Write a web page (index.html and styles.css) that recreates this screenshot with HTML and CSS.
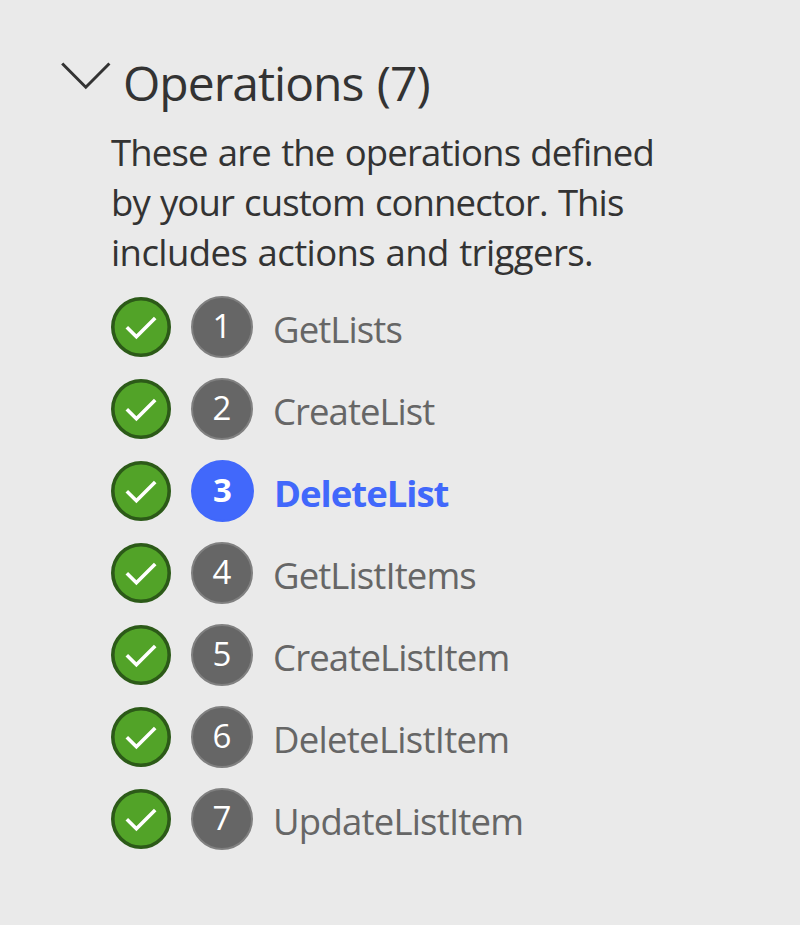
FILE: index.html
```
<!DOCTYPE html>
<html lang="en">
<head>
<meta charset="utf-8">
<title>Operations</title>
<link rel="stylesheet" href="styles.css">
</head>
<body>
<svg class="defs" width="0" height="0" aria-hidden="true">
  <symbol id="check" viewBox="0 0 60 60">
    <circle cx="30" cy="30" r="28.2" fill="#52a328" stroke="#2c5a18" stroke-width="3.6"/>
    <path d="M15.8 30.3 25.4 39.8 44.2 21" fill="none" stroke="#fff" stroke-width="3.6"/>
  </symbol>
</svg>
<section class="operations">
  <header class="heading">
    <svg class="chevron" viewBox="0 0 50 28"><path d="M1.2 1.5 24.8 25.2 48.4 1.5" fill="none" stroke="#333" stroke-width="3"/></svg>
    <h1 class="title">Operations (7)</h1>
  </header>
  <p class="description"><span class="line line-1">These are the operations defined</span><span class="line line-2">by your custom connector. This</span><span class="line line-3">includes actions and triggers.</span></p>
  <ol class="list">
    <li class="item"><svg class="status"><use href="#check"/></svg><span class="number">1</span><span class="label l1">GetLists</span></li>
    <li class="item"><svg class="status"><use href="#check"/></svg><span class="number">2</span><span class="label l2">CreateList</span></li>
    <li class="item selected"><svg class="status"><use href="#check"/></svg><span class="number">3</span><span class="label l3">DeleteList</span></li>
    <li class="item"><svg class="status"><use href="#check"/></svg><span class="number">4</span><span class="label l4">GetListItems</span></li>
    <li class="item"><svg class="status"><use href="#check"/></svg><span class="number">5</span><span class="label l5">CreateListItem</span></li>
    <li class="item"><svg class="status"><use href="#check"/></svg><span class="number">6</span><span class="label l6">DeleteListItem</span></li>
    <li class="item"><svg class="status"><use href="#check"/></svg><span class="number">7</span><span class="label l7">UpdateListItem</span></li>
  </ol>
</section>
</body>
</html>
```
FILE: styles.css
```
* { box-sizing: border-box; }
body {
  margin: 0;
  min-height: 925px;
  background: #eaeaea;
  color: #333;
  font-family: "Open Sans", "Noto Sans", sans-serif;
}
.defs { display: block; }
.operations { padding: 49px 61px 0; }
.heading { display: flex; height: 66px; }
.chevron { width: 50px; height: 28px; margin-top: 13px; flex: none; }
.title {
  margin: 0 0 0 12px;
  font-size: 48px;
  font-weight: 400;
  line-height: 68px;
  letter-spacing: -1px;
  word-spacing: 2px;
  white-space: nowrap;
}
.description { margin: 12px 0 0 50px; font-size: 36.5px; line-height: 50px; }
.line { display: block; white-space: nowrap; word-spacing: 1.5px; }
.line-1 { letter-spacing: -0.84px; }
.line-2 { letter-spacing: -0.88px; }
.line-3 { letter-spacing: -0.59px; }
.list {
  display: flex;
  flex-direction: column;
  gap: 20px;
  margin: 19px 0 0 50px;
  padding: 0;
  list-style: none;
}
.item { display: flex; align-items: center; height: 62px; }
.status { width: 60px; height: 60px; flex: none; }
.number {
  width: 62px;
  height: 62px;
  margin-left: 20px;
  border: 2px solid #808080;
  border-radius: 50%;
  background: #666;
  color: #fff;
  font-size: 33px;
  line-height: 56px;
  text-align: center;
}
.label {
  margin-left: 20px;
  padding-top: 4px;
  color: #666;
  font-size: 36.5px;
  line-height: 50px;
}
.l1 { letter-spacing: -0.89px; }
.l2 { letter-spacing: -0.95px; }
.l3 { letter-spacing: -1px; }
.l4 { letter-spacing: -0.9px; }
.l5 { letter-spacing: -0.86px; }
.l6 { letter-spacing: -0.72px; }
.l7 { letter-spacing: -0.78px; }
.selected .number { width: 63px; border-color: #4168fb; background: #4168fb; font-weight: 700; }
.selected .label { color: #4168fb; font-weight: 700; }
```
